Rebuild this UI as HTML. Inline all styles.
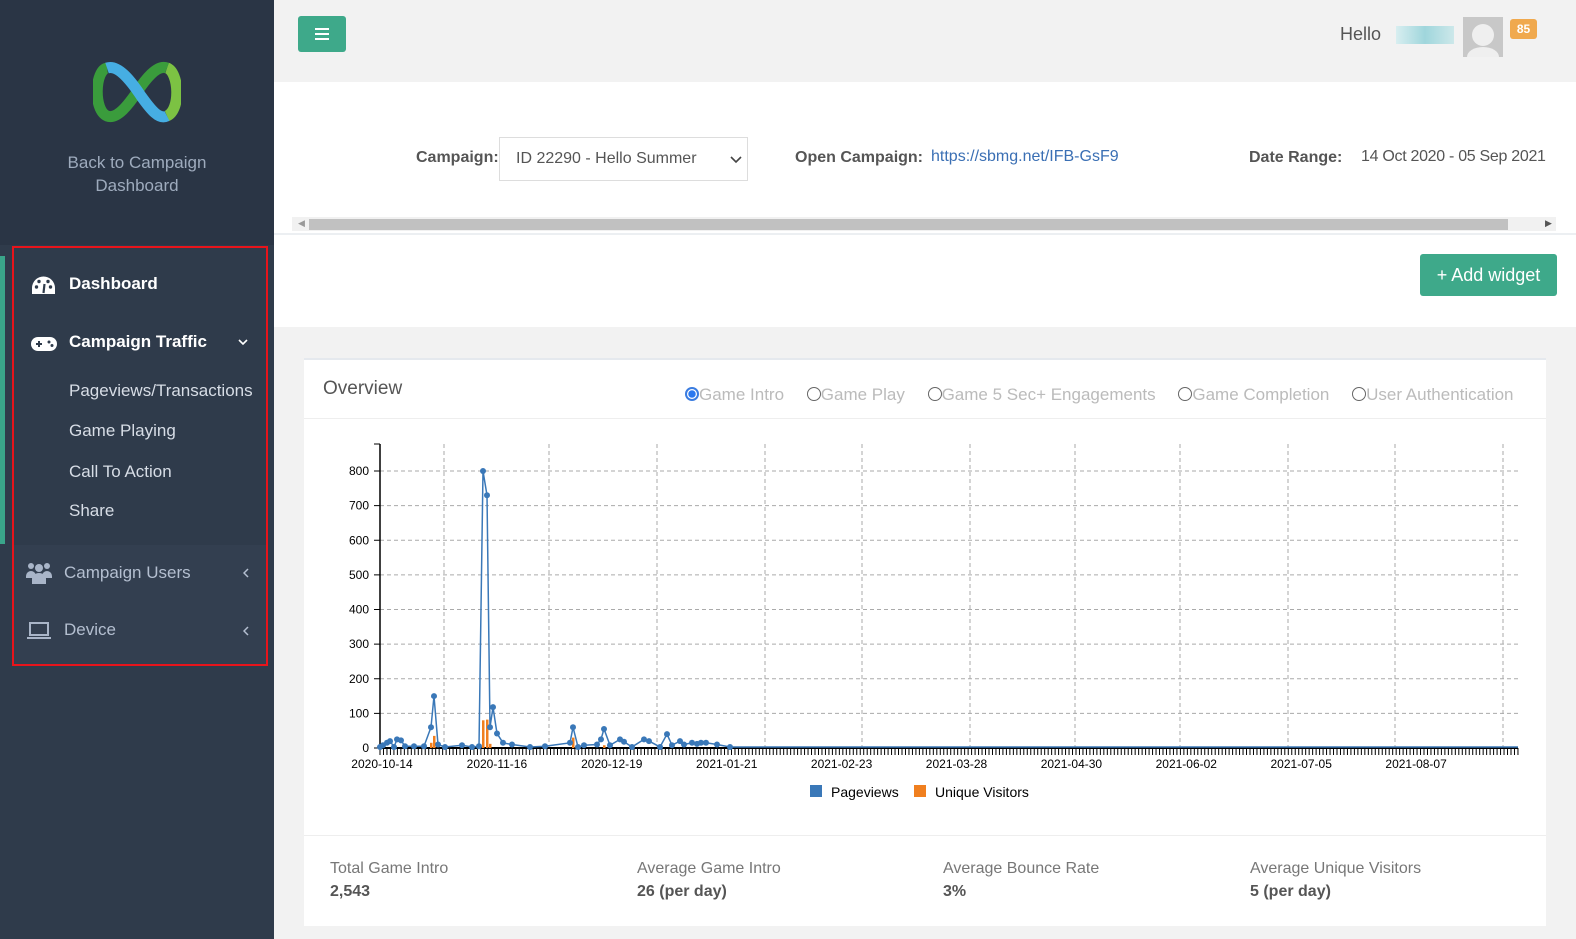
<!DOCTYPE html>
<html><head><meta charset="utf-8"><style>
*{box-sizing:border-box;margin:0;padding:0}
body{width:1576px;height:939px;overflow:hidden;font-family:"Liberation Sans",sans-serif;background:#f2f2f2;position:relative}
.sb{position:absolute;left:0;top:0;width:274px;height:939px;background:#2f3b4b}
.sbtop{position:absolute;left:0;top:0;width:274px;height:245px;background:#2a3545}
.t{position:absolute;white-space:nowrap}
.nav{color:#fff;font-weight:bold;font-size:17px}
.sub{color:#d7dde6;font-size:17px}
.gray{color:#b4bfd0;font-size:17px}
</style></head><body>
<div class="sb"></div>
<div class="sbtop"></div>
<svg class="t" style="left:93px;top:60px" width="88" height="64" viewBox="0 0 88 64">
<path d="M14 8 C2 10 0 50 14 56 C24 60 36 44 44 32" stroke="#3a9c3c" stroke-width="11" fill="none"/>
<path d="M74 8 C86 12 88 50 74 56" stroke="#7cc243" stroke-width="11" fill="none"/>
<path d="M44 32 C52 20 64 4 74 8" stroke="#3a9c3c" stroke-width="11" fill="none"/>
<path d="M14 8 C26 4 40 24 48 36 C58 50 66 60 74 56" stroke="#46aee3" stroke-width="11" fill="none"/>
</svg>
<div class="t" style="left:0;width:274px;top:151px;text-align:center;color:#9eabbd;font-size:17px;line-height:23px">Back to Campaign<br>Dashboard</div>
<div class="t" style="left:0;top:256px;width:5px;height:288px;background:#3aa58a"></div>
<div class="t" style="left:12px;top:246px;width:256px;height:420px;border:2px solid #e8141b"></div>
<div class="t" style="left:14px;top:545px;width:252px;height:119px;background:#333f50"></div>
<svg class="t" style="left:31px;top:275px" width="25" height="20" viewBox="0 0 25 20"><path d="M1 19 L1 13 A11.5 11.5 0 0 1 24 13 L24 19 Z" fill="#fff"/><circle cx="5.5" cy="12" r="1.7" fill="#2f3b4b"/><circle cx="8" cy="6.5" r="1.7" fill="#2f3b4b"/><circle cx="17" cy="6.5" r="1.7" fill="#2f3b4b"/><circle cx="19.5" cy="12" r="1.7" fill="#2f3b4b"/><path d="M12.5 18 L13.5 9" stroke="#2f3b4b" stroke-width="2.2"/></svg>
<div class="t nav" style="left:69px;top:274px">Dashboard</div>
<svg class="t" style="left:31px;top:336px" width="26" height="16" viewBox="0 0 26 16"><rect x="0" y="1" width="26" height="14" rx="7" fill="#fff"/><path d="M5 8h6M8 5v6" stroke="#2f3b4b" stroke-width="2"/><circle cx="18" cy="6" r="1.5" fill="#2f3b4b"/><circle cx="21" cy="9.5" r="1.5" fill="#2f3b4b"/></svg>
<div class="t nav" style="left:69px;top:332px">Campaign Traffic</div>
<svg class="t" style="left:238px;top:339px" width="10" height="7"><path d="M1 1l4 4 4-4" stroke="#fff" stroke-width="1.6" fill="none"/></svg>
<div class="t sub" style="left:69px;top:381px">Pageviews/Transactions</div>
<div class="t sub" style="left:69px;top:421px">Game Playing</div>
<div class="t sub" style="left:69px;top:462px">Call To Action</div>
<div class="t sub" style="left:69px;top:501px">Share</div>
<svg class="t" style="left:26px;top:562px" width="26" height="22" viewBox="0 0 26 22"><g fill="#a9b5c8"><circle cx="5" cy="4" r="3"/><circle cx="21" cy="4" r="3"/><circle cx="13" cy="6" r="4"/><path d="M0 14a5 5 0 0 1 10 0v2H0z"/><path d="M16 14a5 5 0 0 1 10 0v2H16z"/><path d="M6 22v-5a7 6 0 0 1 14 0v5z"/></g></svg>
<div class="t gray" style="left:64px;top:563px">Campaign Users</div>
<svg class="t" style="left:243px;top:568px" width="6" height="10"><path d="M5 1L1 5l4 4" stroke="#b4bfd0" stroke-width="1.5" fill="none"/></svg>
<svg class="t" style="left:27px;top:622px" width="24" height="18" viewBox="0 0 24 18"><rect x="3" y="1" width="18" height="12" fill="none" stroke="#a9b5c8" stroke-width="2"/><rect x="0" y="15" width="24" height="2" fill="#a9b5c8"/></svg>
<div class="t gray" style="left:64px;top:620px">Device</div>
<svg class="t" style="left:243px;top:626px" width="6" height="10"><path d="M5 1L1 5l4 4" stroke="#b4bfd0" stroke-width="1.5" fill="none"/></svg>

<div class="t" style="left:298px;top:16px;width:48px;height:36px;background:#3ea98a;border-radius:3px"></div>
<svg class="t" style="left:315px;top:28px" width="14" height="12"><path d="M0 1h14M0 6h14M0 11h14" stroke="#fff" stroke-width="2"/></svg>
<div class="t" style="left:1340px;top:24px;color:#555;font-size:18px">Hello</div>
<div class="t" style="left:1396px;top:26px;width:58px;height:18px;background:linear-gradient(90deg,#d8eef0,#9fd6dc,#cde8ea)"></div>
<div class="t" style="left:1463px;top:17px;width:40px;height:40px;background:#c8c8c8;overflow:hidden"><div style="position:absolute;left:9px;top:7px;width:22px;height:22px;border-radius:50%;background:#efefef"></div><div style="position:absolute;left:4px;top:30px;width:32px;height:20px;border-radius:50%;background:#efefef"></div></div>
<div class="t" style="left:1510px;top:19px;width:27px;height:20px;background:#f0a94e;border-radius:3px;color:#fff;font-size:12px;font-weight:bold;text-align:center;line-height:20px">85</div>

<div class="t" style="left:274px;top:82px;width:1302px;height:245px;background:#fff"></div>
<div class="t" style="left:416px;top:149px;color:#555;font-weight:bold;font-size:16px">Campaign:</div>
<div class="t" style="left:499px;top:137px;width:249px;height:44px;border:1px solid #ddd;background:#fff"></div>
<div class="t" style="left:516px;top:150px;color:#555;font-size:16px">ID 22290 - Hello Summer</div>
<svg class="t" style="left:730px;top:156px" width="12" height="8"><path d="M1 1l5 5 5-5" stroke="#444" stroke-width="1.6" fill="none"/></svg>
<div class="t" style="left:795px;top:149px;color:#555;font-weight:bold;font-size:16px">Open Campaign:</div>
<div class="t" style="left:931px;top:148px;color:#3a6fb4;font-size:16px">https://sbmg.net/IFB-GsF9</div>
<div class="t" style="left:1249px;top:149px;color:#555;font-weight:bold;font-size:16px">Date Range:</div>
<div class="t" style="left:1361px;top:148px;color:#555;font-size:16px;letter-spacing:-0.3px">14 Oct 2020 - 05 Sep 2021</div>
<div class="t" style="left:292px;top:217px;width:1264px;height:14px;background:#f1f1f1"></div>
<div class="t" style="left:309px;top:219px;width:1199px;height:11px;background:#c1c1c1"></div>
<div class="t" style="left:298px;top:218px;color:#999;font-size:9px">&#9664;</div>
<div class="t" style="left:1545px;top:218px;color:#555;font-size:9px">&#9654;</div>
<div class="t" style="left:274px;top:233px;width:1302px;height:2px;background:#eceff2"></div>
<div class="t" style="left:1420px;top:254px;width:137px;height:42px;background:#3ea98a;border-radius:3px;color:#fff;font-size:18px;text-align:center;line-height:42px">+ Add widget</div>

<div class="t" style="left:304px;top:358px;width:1242px;height:568px;background:#fff;border-top:2px solid #e5e9ee"></div>
<div class="t" style="left:323px;top:378px;color:#555;font-size:19px">Overview</div>
<div class="t" style="left:685px;top:385px;color:#bbb;font-size:17px">
<span style="display:inline-block;width:14px;height:14px;border-radius:50%;border:2px solid #3a7ce0;background:radial-gradient(#2a78ef 50%,#fff 55%);vertical-align:-1px"></span>Game Intro
<span style="display:inline-block;width:14px;height:14px;border-radius:50%;border:1px solid #666;margin-left:18px;vertical-align:-1px"></span>Game Play
<span style="display:inline-block;width:14px;height:14px;border-radius:50%;border:1px solid #666;margin-left:18px;vertical-align:-1px"></span>Game 5 Sec+ Engagements
<span style="display:inline-block;width:14px;height:14px;border-radius:50%;border:1px solid #666;margin-left:18px;vertical-align:-1px"></span>Game Completion
<span style="display:inline-block;width:14px;height:14px;border-radius:50%;border:1px solid #666;margin-left:18px;vertical-align:-1px"></span>User Authentication</div>
<div class="t" style="left:304px;top:418px;width:1242px;height:1px;background:#eee"></div>

<svg class="t" id="ch" style="left:330px;top:430px" width="1200" height="380" viewBox="330 430 1200 380" font-family="Liberation Sans,sans-serif" font-size="12"></svg>
<script>
var s='',ys=[0,100,200,300,400,500,600,700,800];
ys.forEach(function(v){var y=748-v*0.34625;if(v)s+='<line x1="380" x2="1518" y1="'+y+'" y2="'+y+'" stroke="#aaa" stroke-dasharray="4,3"/>';s+='<line x1="374" x2="380" y1="'+y+'" y2="'+y+'" stroke="#000"/><text x="369" y="'+(y+4)+'" text-anchor="end">'+v+'</text>';});
[444,549,657,765,862,970,1075,1180,1288,1395,1503].forEach(function(x){s+='<line x1="'+x+'" x2="'+x+'" y1="444" y2="748" stroke="#aaa" stroke-dasharray="4,3"/>';});
s+='<line x1="380" x2="380" y1="444" y2="748" stroke="#000" stroke-width="1.5"/><line x1="374" x2="380" y1="444" y2="444" stroke="#000"/>';
for(var x=380;x<=1518;x+=3.48)s+='<line x1="'+x+'" x2="'+x+'" y1="748" y2="755" stroke="#000"/>';
s+='<line x1="380" x2="1518" y1="748" y2="748" stroke="#000" stroke-width="2"/>';
['2020-10-14','2020-11-16','2020-12-19','2021-01-21','2021-02-23','2021-03-28','2021-04-30','2021-06-02','2021-07-05','2021-08-07'].forEach(function(t,i){s+='<text x="'+(382+i*114.9)+'" y="768" text-anchor="middle">'+t+'</text>';});
[[431,15],[434,35],[483,80],[487,82],[490,12],[573,30],[604,8]].forEach(function(b){s+='<rect x="'+(b[0]-1)+'" y="'+(748-b[1]*0.34625)+'" width="2.5" height="'+(b[1]*0.34625)+'" fill="#f07f1f"/>';});
var p=[[380,3],[383,8],[387,15],[390,20],[394,3],[397,25],[401,22],[405,5],[414,5],[424,5],[431,60],[434,150],[438,10],[445,3],[462,8],[472,3],[479,5],[483,800],[487,730],[490,60],[493,118],[497,42],[503,15],[512,10],[530,3],[545,5],[570,15],[573,60],[578,3],[584,8],[597,10],[601,25],[604,55],[610,8],[620,25],[624,18],[632,3],[644,25],[649,20],[660,3],[667,40],[672,8],[680,20],[684,10],[692,15],[697,12],[701,15],[706,15],[717,10],[730,3],[760,3],[1518,3]];
var d='';p.forEach(function(q,i){d+=(i?'L':'M')+q[0]+' '+(748-q[1]*0.34625);});
s+='<path d="'+d+'" fill="none" stroke="#3a78b8" stroke-width="1.5"/>';
p.slice(0,-2).forEach(function(q){s+='<circle cx="'+q[0]+'" cy="'+(748-q[1]*0.34625)+'" r="3" fill="#3a78b8"/>';});
s+='<rect x="810" y="785" width="12" height="12" fill="#3a78b8"/><text x="831" y="797" font-size="14">Pageviews</text><rect x="914" y="785" width="12" height="12" fill="#f07f1f"/><text x="935" y="797" font-size="14">Unique Visitors</text>';
document.getElementById('ch').innerHTML=s;
</script>
<div class="t" style="left:304px;top:835px;width:1242px;height:1px;background:#eee"></div>
<div class="t" style="left:330px;top:857px;color:#777;font-size:16px;line-height:23px">Total Game Intro<br><b style="color:#555">2,543</b></div>
<div class="t" style="left:637px;top:857px;color:#777;font-size:16px;line-height:23px">Average Game Intro<br><b style="color:#555">26 (per day)</b></div>
<div class="t" style="left:943px;top:857px;color:#777;font-size:16px;line-height:23px">Average Bounce Rate<br><b style="color:#555">3%</b></div>
<div class="t" style="left:1250px;top:857px;color:#777;font-size:16px;line-height:23px">Average Unique Visitors<br><b style="color:#555">5 (per day)</b></div>
</body></html>
